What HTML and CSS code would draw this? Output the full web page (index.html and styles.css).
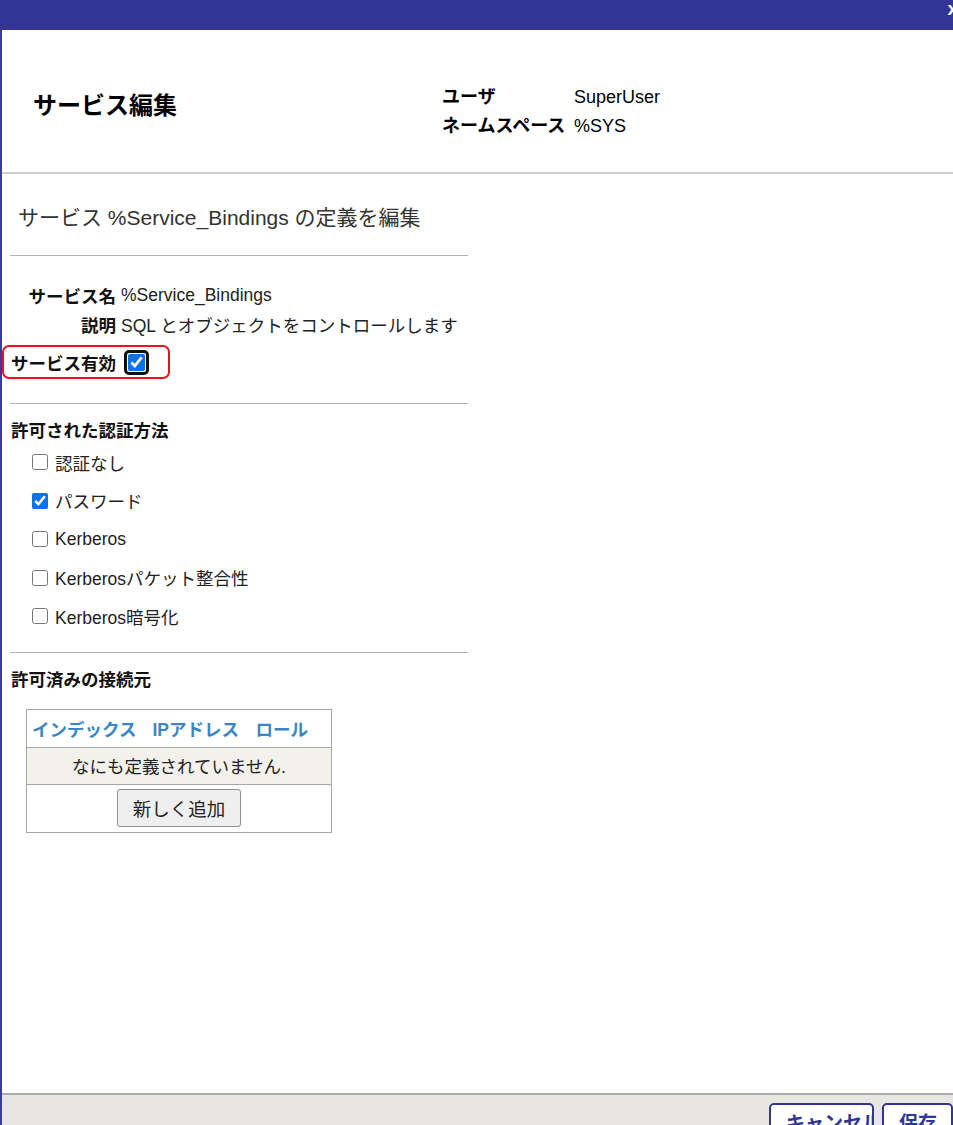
FILE: index.html
```html
<!DOCTYPE html>
<html lang="ja">
<head>
<meta charset="utf-8">
<title>サービス編集</title>
<link rel="stylesheet" href="styles.css">
</head>
<body>
<div class="window">
  <div class="titlebar"><span class="close">x</span></div>
  <div class="page">
    <header class="header">
      <h1 class="title">サービス編集</h1>
      <dl class="userinfo">
        <dt>ユーザ</dt><dd>SuperUser</dd>
        <dt>ネームスペース</dt><dd>%SYS</dd>
      </dl>
    </header>
    <main class="content">
      <h2 class="subtitle">サービス %Service_Bindings の定義を編集</h2>
      <hr class="rule rule-first">
      <div class="field field-first"><span class="field-label">サービス名</span><span class="field-value">%Service_Bindings</span></div>
      <div class="field"><span class="field-label">説明</span><span class="field-value">SQL とオブジェクトをコントロールします</span></div>
      <div class="field field-highlight"><span class="field-label">サービス有効</span><span class="focus-ring"><input class="cb cb-big" type="checkbox" checked></span></div>
      <hr class="rule rule-mid">
      <h3 class="section-title">許可された認証方法</h3>
      <ul class="checklist">
        <li><input class="cb" type="checkbox"><span>認証なし</span></li>
        <li><input class="cb" type="checkbox" checked><span>パスワード</span></li>
        <li><input class="cb" type="checkbox"><span>Kerberos</span></li>
        <li><input class="cb" type="checkbox"><span>Kerberosパケット整合性</span></li>
        <li><input class="cb" type="checkbox"><span>Kerberos暗号化</span></li>
      </ul>
      <hr class="rule rule-last">
      <h3 class="section-title">許可済みの接続元</h3>
      <table class="grid">
        <colgroup><col class="c1"><col class="c2"><col class="c3"></colgroup>
        <thead>
          <tr><th class="th1">インデックス</th><th class="th2">IPアドレス</th><th class="th3">ロール</th></tr>
        </thead>
        <tbody>
          <tr class="empty-row"><td colspan="3">なにも定義されていません.</td></tr>
          <tr class="add-row"><td colspan="3"><button class="btn-add" type="button">新しく追加</button></td></tr>
        </tbody>
      </table>
    </main>
    <footer class="footer">
      <button class="btn-footer btn-cancel" type="button">キャンセル</button>
      <button class="btn-footer btn-save" type="button">保存</button>
    </footer>
  </div>
</div>
</body>
</html>
```
FILE: styles.css
```css
html, body {
  margin: 0;
  padding: 0;
  background: #fff;
}
body {
  font-family: "Liberation Sans", "Noto Sans CJK JP", sans-serif;
  color: #111;
}
.window {
  height: 1125px;
  display: flex;
  flex-direction: column;
  overflow: hidden;
}
.titlebar {
  flex: none;
  height: 30px;
  background: #333594;
  display: flex;
  justify-content: flex-end;
  overflow: hidden;
}
.close {
  color: #fff;
  font-weight: bold;
  font-size: 19px;
  line-height: 19px;
  margin-right: -5px;
  margin-top: -1px;
}
.page {
  flex: 1;
  min-height: 0;
  display: flex;
  flex-direction: column;
  border-left: 2px solid #3a3aa2;
}
.header {
  flex: none;
  height: 144px;
  box-sizing: border-box;
  border-bottom: 2px solid #cdcdcd;
  display: flex;
  align-items: flex-start;
  padding: 0 0 0 31px;
}
.title {
  flex: none;
  width: 409px;
  margin: 61px 0 0;
  font-size: 24px;
  font-weight: bold;
  line-height: 30px;
  color: #000;
}
.userinfo {
  margin: 53px 0 0;
  display: grid;
  grid-template-columns: 132px auto;
  font-size: 18px;
  line-height: 29px;
  color: #000;
}
.userinfo dt {
  font-weight: bold;
}
.userinfo dd {
  margin: 0;
}
.content {
  flex: 1;
  padding: 0 0 0 9px;
  font-size: 17.5px;
  color: #222;
}
.subtitle {
  margin: 29px 0 0 7px;
  font-size: 21px;
  font-weight: normal;
  line-height: 30px;
  color: #333;
}
.rule {
  border: 0;
  height: 1px;
  background: #b2b2b2;
  width: 458px;
  margin: 0 0 0 -1px;
}
.rule-first { margin-top: 22px; }
.rule-mid { margin-top: 24px; }
.rule-last { margin-top: 16px; }
.field {
  display: flex;
  align-items: center;
  height: 29px;
}
.field-first {
  margin-top: 25px;
}
.field-label {
  width: 105px;
  flex: none;
  text-align: right;
  font-weight: bold;
  color: #111;
  margin-right: 5px;
}
.field-highlight {
  width: fit-content;
  height: 34px;
  box-sizing: border-box;
  margin: 6px 0 0 -9px;
  border: 2px solid #e8141c;
  border-radius: 7px;
  padding: 0 19px 0 7px;
}
.field-highlight .field-label {
  margin-right: 8px;
}
.focus-ring {
  display: inline-flex;
  border: 3px solid #111;
  border-radius: 5px;
  padding: 1px;
}
.cb {
  width: 16px;
  height: 16px;
  margin: 0;
  accent-color: #0b72e7;
}
.cb-big {
  width: 17px;
  height: 17px;
}
.section-title {
  margin: 15px 0 0;
  font-size: 17.5px;
  font-weight: bold;
  line-height: 24px;
  color: #111;
}
.checklist {
  list-style: none;
  margin: 0;
  padding: 0 0 0 21px;
}
.checklist li {
  height: 38.5px;
  display: flex;
  align-items: center;
  gap: 7px;
}
.grid {
  margin: 17px 0 0 15px;
  border-collapse: collapse;
  table-layout: fixed;
  width: 305px;
  border: 1px solid #a6a6a6;
}
.c1 { width: 121px; }
.c2 { width: 104px; }
.c3 { width: 80px; }
.grid th {
  height: 37px;
  padding: 0;
  text-align: left;
  font-size: 17.5px;
  font-weight: bold;
  color: #3a86c4;
  white-space: nowrap;
  border-bottom: 1px solid #a6a6a6;
}
.th1 { padding-left: 5px !important; }
.th2 { padding-left: 5px !important; }
.th3 { padding-left: 4px !important; }
.empty-row td {
  height: 36px;
  padding: 0;
  text-align: center;
  background: #f2f1eb;
  border-bottom: 1px solid #a6a6a6;
  color: #222;
}
.add-row td {
  height: 47px;
  padding: 0;
  text-align: center;
}
.btn-add {
  height: 38px;
  padding: 0 15px;
  font-family: inherit;
  font-size: 18.5px;
  color: #222;
  background: #efefef;
  border: 1px solid #8f8f8f;
  border-radius: 3px;
}
.footer {
  flex: none;
  height: 32px;
  box-sizing: border-box;
  border-top: 2px solid #acacac;
  background: #e7e6e1;
  display: flex;
  justify-content: flex-end;
  align-items: flex-start;
  gap: 8px;
  padding-top: 8px;
  overflow: hidden;
}
.btn-footer {
  flex: none;
  height: 36px;
  box-sizing: border-box;
  padding: 6px 0 0 15px;
  text-align: left;
  white-space: nowrap;
  overflow: hidden;
  background: #fff;
  border: 2px solid #333594;
  border-radius: 5px;
  color: #333594;
  font-family: inherit;
  font-size: 19px;
  font-weight: bold;
  line-height: 22px;
}
.btn-cancel { width: 105px; }
.btn-save { width: 71px; }
```
